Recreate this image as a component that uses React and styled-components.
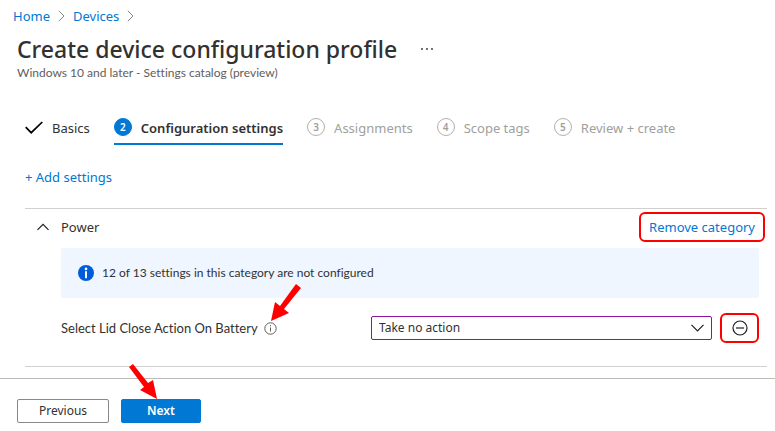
import React from 'react';
import styled, { createGlobalStyle, css } from 'styled-components';

const blue = '#0078d4';
const markRed = '#ff0000';
const compactFont = "Lato, 'Noto Sans', sans-serif";

const GlobalStyle = createGlobalStyle`
  *, *::before, *::after { box-sizing: border-box; }
  body {
    margin: 0;
    background: #fff;
    color: #323130;
    font-family: 'Noto Sans', 'Open Sans', sans-serif;
    font-size: 13px;
    font-variant-ligatures: none;
    line-height: 20px;
  }
  button, select { font: inherit; color: inherit; }
  svg { display: block; flex: none; }
`;

const Page = styled.div`
  display: flex;
  flex-direction: column;
`;

const Breadcrumb = styled.nav`
  display: flex;
  align-items: center;
  gap: 8px;
  padding: 6px 13px 0;
`;

const Link = styled.a`
  color: ${blue};
  text-decoration: none;
`;

const Header = styled.header`
  padding: 7px 17px 0;
`;

const TitleRow = styled.div`
  display: flex;
  align-items: center;
  gap: 23px;
`;

const Title = styled.h1`
  margin: 0;
  font-size: 23px;
  font-weight: 500;
  line-height: 32px;
`;

const Subtitle = styled.p`
  margin: 0;
  color: #605e5c;
  font-family: ${compactFont};
  font-size: 12px;
  line-height: 16px;
`;

const PlainButton = styled.button`
  display: flex;
  align-items: center;
  justify-content: center;
  padding: 0;
  border: 0;
  background: none;
  cursor: pointer;
`;

const Main = styled.main`
  display: flex;
  flex-direction: column;
  padding: 32px 8px 0 25px;
`;

const Steps = styled.ol`
  display: flex;
  gap: 24px;
  margin: 0;
  padding: 0;
  list-style: none;
`;

const Step = styled.li`
  display: flex;
  align-items: center;
  gap: 9px;
  padding: 5px 0;
  border-bottom: 2px solid transparent;
  white-space: nowrap;
  color: ${({ $state }) => ($state === 'todo' ? '#a19f9d' : '#323130')};
  ${({ $state }) => $state === 'current' && css`
    border-bottom-color: ${blue};
    font-weight: 600;
  `}
`;

const StepNumber = styled.span`
  display: flex;
  align-items: center;
  justify-content: center;
  width: 18px;
  height: 18px;
  margin-bottom: 2px;
  border: 1px solid ${({ $current }) => ($current ? blue : '#b3b0ad')};
  border-radius: 50%;
  background: ${({ $current }) => ($current ? blue : 'transparent')};
  color: ${({ $current }) => ($current ? '#fff' : '#a19f9d')};
  font-size: 10px;
  font-weight: 600;
  line-height: 16px;
`;

const AddSettings = styled(PlainButton)`
  align-self: flex-start;
  margin: 22px 0 21px;
  color: ${blue};
`;

const Category = styled.section`
  padding: 3px 8px 23px 12px;
  border-top: 1px solid #d2d0ce;
  border-bottom: 1px solid #d2d0ce;
`;

const CategoryHeader = styled.div`
  display: flex;
  align-items: center;
  gap: 12px;
  margin-right: -6px;
`;

const CategoryName = styled.h2`
  flex: 1;
  margin: 0;
  font-size: 13px;
  font-weight: 400;
`;

const Marked = styled.div`
  flex: none;
  border: 2px solid ${markRed};
  border-radius: 6px;
`;

const RemoveCategory = styled(PlainButton)`
  height: 26px;
  padding: 0 8px;
  color: ${blue};
`;

const CategoryBody = styled.div`
  display: flex;
  flex-direction: column;
  gap: 15px;
  margin: 6px 0 0 24px;
`;

const Notice = styled.div`
  display: flex;
  align-items: center;
  gap: 8px;
  min-height: 50px;
  padding: 0 17px;
  border-radius: 2px;
  background: #eff6ff;
  font-family: ${compactFont};
  font-size: 12px;
`;

const SettingRow = styled.div`
  display: grid;
  grid-template-columns: minmax(0, 302fr) minmax(0, 341fr) auto;
  align-items: center;
  column-gap: 8px;
`;

const SettingLabel = styled.div`
  display: flex;
  align-items: center;
  gap: 6px;
  font-family: ${compactFont};
`;

const Anchor = styled.div`
  position: relative;
`;

const SelectWrap = styled.div`
  display: grid;
  align-items: center;
  > * { grid-area: 1 / 1; }
  > svg {
    justify-self: end;
    margin-right: 8px;
    pointer-events: none;
  }
`;

const Select = styled.select`
  width: 100%;
  height: 24px;
  padding: 0 28px 0 7px;
  border: 1px solid #881798;
  border-radius: 2px;
  background: #fff;
  font-size: 12px;
  appearance: none;
`;

const RemoveSetting = styled(PlainButton)`
  width: 35px;
  height: 26px;
`;

const Footer = styled.footer`
  display: flex;
  gap: 12px;
  margin-top: 11px;
  padding: 20px 17px 8px;
  border-top: 1px solid #bebbb8;
`;

const FooterButton = styled.button`
  width: ${({ $primary }) => ($primary ? 80 : 92)}px;
  height: 24px;
  padding: 0;
  border: 1px solid ${({ $primary }) => ($primary ? blue : '#8a8886')};
  border-radius: 2px;
  background: ${({ $primary }) => ($primary ? blue : '#fff')};
  color: ${({ $primary }) => ($primary ? '#fff' : '#323130')};
  font-size: 12px;
  font-weight: ${({ $primary }) => ($primary ? 600 : 400)};
  line-height: 20px;
  cursor: pointer;
`;

const InfoArrow = styled.svg`
  position: absolute;
  left: 6px;
  bottom: 13px;
  pointer-events: none;
`;

const NextArrow = styled.svg`
  position: absolute;
  left: 7px;
  bottom: 24px;
  pointer-events: none;
`;

const BreadcrumbChevron = () => (
  <svg width="7" height="12" viewBox="0 0 7 12" fill="none" stroke="#8a8886" aria-hidden="true">
    <path d="M.8.8 6 6 .8 11.2" />
  </svg>
);

const steps = [
  { label: 'Basics', state: 'done' },
  { label: 'Configuration settings', state: 'current' },
  { label: 'Assignments', state: 'todo' },
  { label: 'Scope tags', state: 'todo' },
  { label: 'Review + create', state: 'todo' },
];

export default function App() {
  return (
    <Page>
      <GlobalStyle />
      <Breadcrumb aria-label="Breadcrumb">
        <Link href="#home">Home</Link>
        <BreadcrumbChevron />
        <Link href="#devices">Devices</Link>
        <BreadcrumbChevron />
      </Breadcrumb>

      <Header>
        <TitleRow>
          <Title>Create device configuration profile</Title>
          <PlainButton type="button" aria-label="More actions">
            <svg width="14" height="12" viewBox="0 0 14 12" fill="#323130">
              <circle cx="2" cy="6" r=".9" />
              <circle cx="7" cy="6" r=".9" />
              <circle cx="12" cy="6" r=".9" />
            </svg>
          </PlainButton>
        </TitleRow>
        <Subtitle>Windows 10 and later - Settings catalog (preview)</Subtitle>
      </Header>

      <Main>
        <Steps>
          {steps.map(({ label, state }, i) => (
            <Step key={label} $state={state} aria-current={state === 'current' ? 'step' : undefined}>
              {state === 'done' ? (
                <svg width="18" height="14" viewBox="0 0 18 14" fill="none" stroke="#000" strokeWidth="1.7" aria-hidden="true">
                  <path d="M.7 6.2 6.2 11.7 17.3 1" />
                </svg>
              ) : (
                <StepNumber $current={state === 'current'}>{i + 1}</StepNumber>
              )}
              {label}
            </Step>
          ))}
        </Steps>

        <AddSettings type="button">+ Add settings</AddSettings>

        <Category>
          <CategoryHeader>
            <PlainButton type="button" aria-label="Collapse Power" aria-expanded="true">
              <svg width="12" height="8" viewBox="0 0 12 8" fill="none" stroke="#201f1e" strokeWidth="1.2">
                <path d="M.5 6.8 6 1.3 11.5 6.8" />
              </svg>
            </PlainButton>
            <CategoryName>Power</CategoryName>
            <Marked>
              <RemoveCategory type="button">Remove category</RemoveCategory>
            </Marked>
          </CategoryHeader>

          <CategoryBody>
            <Notice role="status">
              <svg width="16" height="16" viewBox="0 0 16 16" aria-hidden="true">
                <circle cx="8" cy="8" r="8" fill="#015cda" />
                <circle cx="8" cy="3.9" r="1.3" fill="#fff" />
                <rect x="7" y="6.2" width="2" height="7" fill="#fff" />
              </svg>
              <span>12 of 13 settings in this category are not configured</span>
            </Notice>

            <SettingRow>
              <SettingLabel>
                <label htmlFor="lid-action">Select Lid Close Action On Battery</label>
                <Anchor>
                  <PlainButton type="button" aria-label="About this setting">
                    <svg width="13" height="13" viewBox="0 0 13 13" fill="none" stroke="#605e5c">
                      <circle cx="6.5" cy="6.5" r="5.7" />
                      <path d="M6.5 5.5v4M6.5 3.2v1.2" />
                    </svg>
                  </PlainButton>
                  <InfoArrow width="32" height="38" viewBox="0 0 32 38" fill={markRed} aria-hidden="true">
                    <path d="M1 37 5 18 10 22 26 0 31 4 14 25 19 29Z" />
                  </InfoArrow>
                </Anchor>
              </SettingLabel>
              <SelectWrap>
                <Select id="lid-action" defaultValue="none">
                  <option value="none">Take no action</option>
                  <option value="sleep">Sleep</option>
                  <option value="hibernate">System hibernate state</option>
                  <option value="shutdown">System shutdown state</option>
                </Select>
                <svg width="13" height="8" viewBox="0 0 13 8" fill="none" stroke="#201f1e" strokeWidth="1.2" aria-hidden="true">
                  <path d="M.5.8 6.5 6.8 12.5.8" />
                </svg>
              </SelectWrap>
              <Marked>
                <RemoveSetting type="button" aria-label="Remove setting">
                  <svg width="16" height="16" viewBox="0 0 16 16" fill="none" stroke="#201f1e" strokeWidth="1.2">
                    <circle cx="8" cy="8" r="7" />
                    <path d="M4 8h8" />
                  </svg>
                </RemoveSetting>
              </Marked>
            </SettingRow>
          </CategoryBody>
        </Category>
      </Main>

      <Footer>
        <FooterButton type="button">Previous</FooterButton>
        <Anchor>
          <FooterButton type="button" $primary>Next</FooterButton>
          <NextArrow width="30" height="36" viewBox="0 0 30 36" fill={markRed} aria-hidden="true">
            <path d="M29 36 25 17 20 20 5 1 1 4 16 24 12 27Z" />
          </NextArrow>
        </Anchor>
      </Footer>
    </Page>
  );
}
